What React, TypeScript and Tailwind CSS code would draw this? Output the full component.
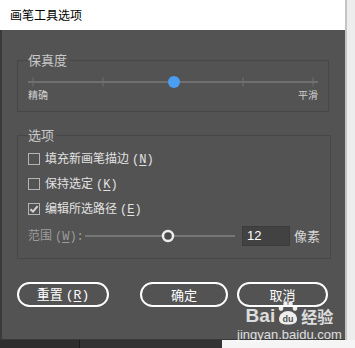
import React from "react";

function Mnemonic({ label, k }: { label: string; k: string }) {
  return (
    <span className="whitespace-nowrap">
      {label}
      <span className="font-['Liberation_Mono',monospace] ml-[3px]">
        (<span className="underline underline-offset-2 decoration-1">{k}</span>)
      </span>
    </span>
  );
}

function CheckRow({ label, k, checked }: { label: string; k: string; checked?: boolean }) {
  return (
    <div className="h-[25px] flex items-center">
      <span className="w-[12px] h-[12px] border border-[#b4b4b4] flex items-center justify-center">
        {checked && (
          <svg width="10" height="10" viewBox="0 0 10 10">
            <path d="M1.5 5.2 L4 7.6 L8.6 2.2" fill="none" stroke="#d6d6d6" strokeWidth="2" />
          </svg>
        )}
      </span>
      <span className="ml-[5px] text-[12px] leading-[16px] text-[#e2e2e2]">
        <Mnemonic label={label} k={k} />
      </span>
    </div>
  );
}

export default function App() {
  const ticks = [5, 75, 215, 285];

  return (
    <div className="w-[355px] h-[348px] flex flex-col bg-[#f3f3f3] font-['Noto_Sans_CJK_SC',sans-serif] overflow-hidden">
      <div className="flex h-[340px]">
        <div className="w-[345px] flex flex-col">
          {/* title bar */}
          <div className="h-[30px] bg-white flex items-center pl-[10px] text-[12px] text-[#000]">
            画笔工具选项
          </div>

          {/* dialog body */}
          <div className="relative flex-1 flex flex-col bg-[#535353] border-l-2 border-b border-[#3a3a3a] pl-[15px] pr-[16px] pt-[22px]">
            {/* fidelity */}
            <fieldset className="border border-[#474747] px-[10px] pb-[10px]">
              <legend className="text-[13px] leading-[16px] text-[#c9c9c9] pr-[2px]">保真度</legend>
              <svg width="290" height="14" className="mt-[7px] block">
                <line x1="0" y1="7" x2="290" y2="7" stroke="#707070" strokeWidth="2" />
                {ticks.map((t) => (
                  <line key={t} x1={t} y1="2.5" x2={t} y2="11.5" stroke="#707070" strokeWidth="1" />
                ))}
                <circle cx="146" cy="7" r="6" fill="#4a9ef2" />
              </svg>
              <div className="flex justify-between text-[10px] leading-[12px] text-[#cfcfcf]">
                <span>精确</span>
                <span>平滑</span>
              </div>
            </fieldset>

            {/* options */}
            <fieldset className="mt-[15px] border border-[#474747] px-[10px] pb-[11px]">
              <legend className="text-[13px] leading-[16px] text-[#c9c9c9] pr-[2px]">选项</legend>
              <div className="mt-[3px]">
                <CheckRow label="填充新画笔描边" k="N" />
                <CheckRow label="保持选定" k="K" />
                <CheckRow label="编辑所选路径" k="E" checked />
              </div>
              <div className="mt-[4px] h-[22px] flex items-center whitespace-nowrap">
                <span className="w-[57px] shrink-0 text-[12px] leading-[16px] text-[#9c9c9c]">
                  范围
                  <span className="font-['Liberation_Mono',monospace] ml-[3px]">
                    (<span className="underline underline-offset-2">W</span>):
                  </span>
                </span>
                <svg width="150" height="14" className="block shrink-0">
                  <line x1="0" y1="7" x2="150" y2="7" stroke="#767676" strokeWidth="2" />
                  <circle cx="83" cy="7" r="5" fill="#4a4a4a" stroke="#ececec" strokeWidth="2.5" />
                </svg>
                <div className="ml-[7px] shrink-0 w-[48px] h-[20px] bg-[#424242] border border-[#3c3c3c] flex items-center pl-[4px] text-[13px] text-white font-['Liberation_Sans',sans-serif]">
                  12
                </div>
                <span className="ml-[4px] shrink-0 text-[13px] leading-[16px] text-[#d8d8d8]">像素</span>
              </div>
            </fieldset>

            {/* buttons */}
            <div className="mt-[23px] flex text-[13px] text-white">
              <button className="w-[92px] h-[25px] rounded-full border-2 border-white flex items-center justify-center">
                <Mnemonic label="重置" k="R" />
              </button>
              <button className="ml-[31px] w-[88px] h-[25px] rounded-full border-2 border-white flex items-center justify-center">
                确定
              </button>
              <button className="ml-[9px] w-[91px] h-[25px] rounded-full border-2 border-white flex items-center justify-center">
                取消
              </button>
            </div>

            {/* watermark */}
            <div className="absolute left-[235px] top-[271px] flex flex-col items-center text-white/80 pointer-events-none">
              <div className="flex items-end h-[24px]">
                <span className="font-['Liberation_Sans',sans-serif] font-bold text-[19px] leading-[18px]">Bai</span>
                <svg width="24" height="24" viewBox="0 0 24 24" className="mx-[1px] opacity-90">
                  <ellipse cx="5" cy="7" rx="2.3" ry="2.8" fill="#fff" />
                  <ellipse cx="9.5" cy="3" rx="2.2" ry="2.8" fill="#fff" />
                  <ellipse cx="14.5" cy="3" rx="2.2" ry="2.8" fill="#fff" />
                  <ellipse cx="19" cy="7" rx="2.3" ry="2.8" fill="#fff" />
                  <path d="M3 18 C3 13 8 10 12 10 C16 10 21 13 21 18 C21 22 18 23.5 12 23.5 C6 23.5 3 22 3 18 Z" fill="#fff" />
                  <text x="12" y="21" textAnchor="middle" fontSize="9" fontWeight="bold" fontFamily="Liberation Sans" fill="#535353">du</text>
                </svg>
                <span className="text-[16px] font-bold leading-[18px]">经验</span>
              </div>
              <div className="text-[13px] leading-[13px] font-['Liberation_Sans',sans-serif] mt-[3px]">
                jingyan.baidu.com
              </div>
            </div>
          </div>
        </div>
        <div className="flex-1 border-l-2 border-[#c4c4c4] bg-[#ededed]" />
      </div>
      <div className="flex h-[8px]">
        <div className="w-[80px] bg-[#2e2e2e] border-r border-[#1c1c1c]" />
        <div className="w-[142px] bg-[#333333]" />
        <div className="flex-1 bg-[#f5f5f5]" />
      </div>
    </div>
  );
}
